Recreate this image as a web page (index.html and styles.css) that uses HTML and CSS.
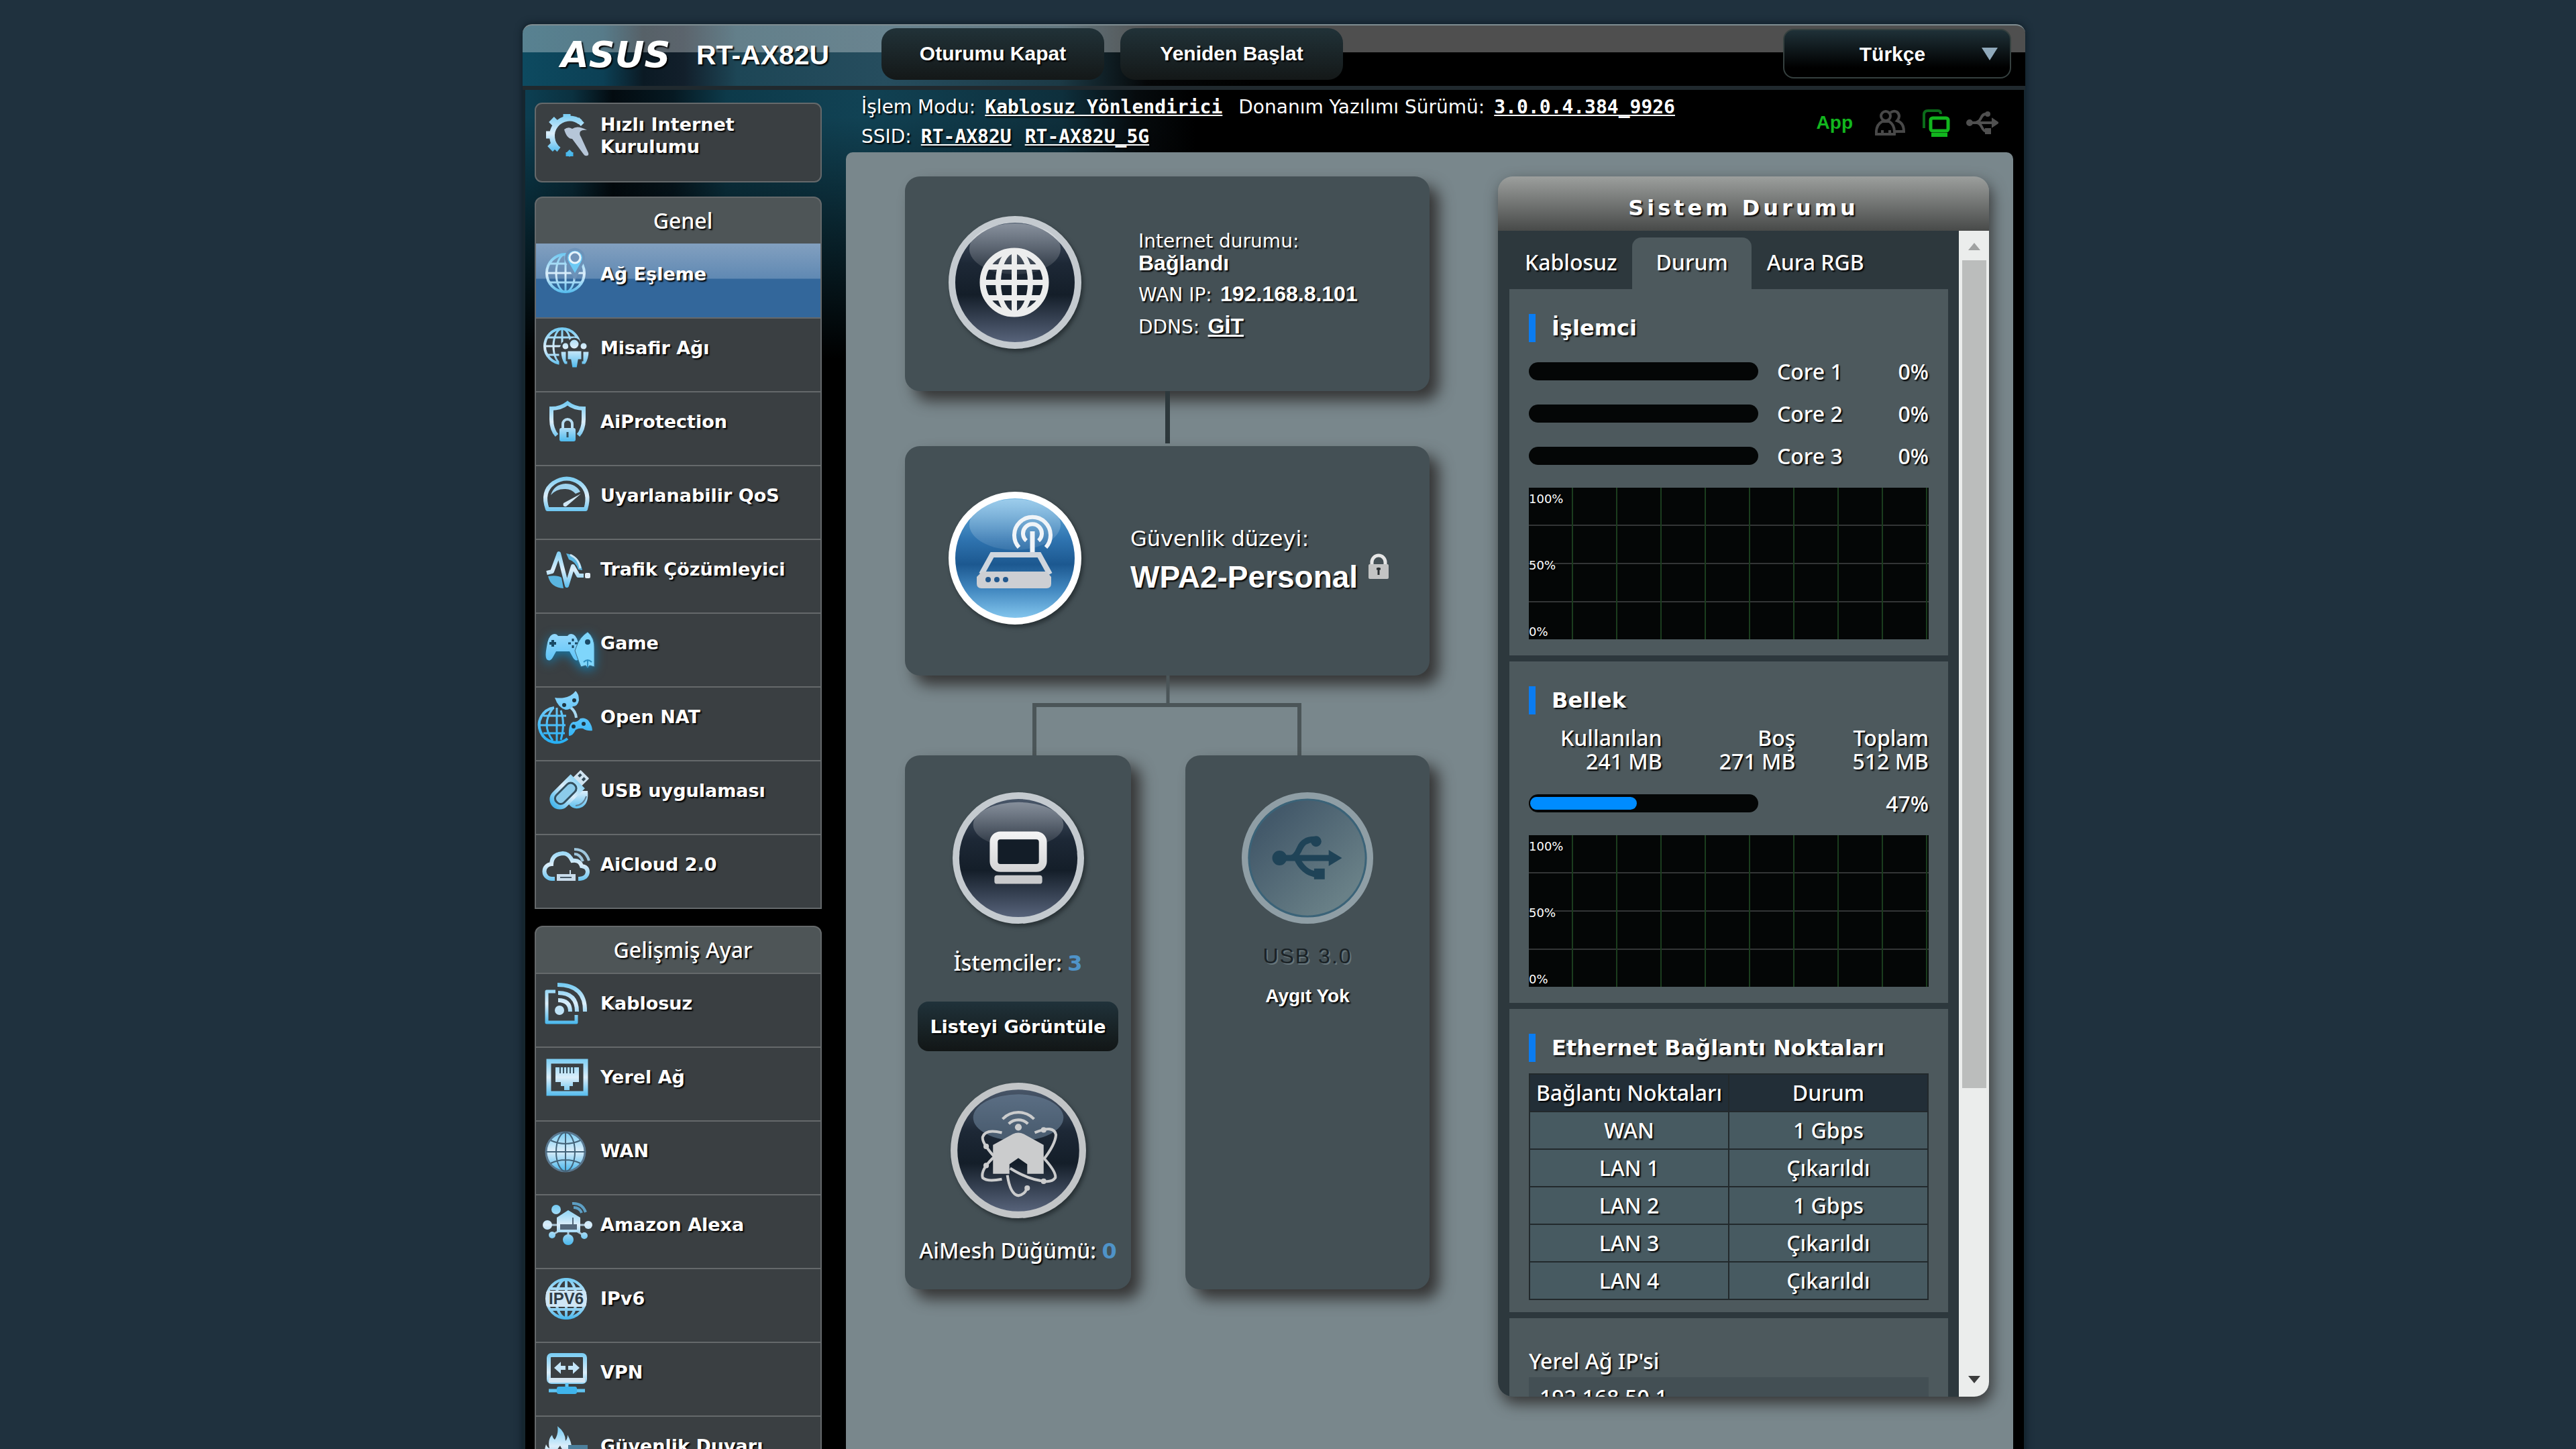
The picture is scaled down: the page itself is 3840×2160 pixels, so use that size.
FILE: index.html
```html
<!DOCTYPE html>
<html lang="tr">
<head>
    <meta charset="UTF-8">
    <meta name="viewport" content="width=device-width, initial-scale=1.0">
    <title>ASUS Wireless Router RT-AX82U - Ağ Eşleme</title>
    <link rel="stylesheet" href="styles.css">
</head>
<body>
    <!-- shared gradients and shapes -->
    <svg class="defs" width="0" height="0" aria-hidden="true">
        <defs>
            <linearGradient id="ice" gradientUnits="userSpaceOnUse" x1="0" y1="12" x2="0" y2="76">
                <stop offset="0" stop-color="#6cc8f2"/>
                <stop offset="0.5" stop-color="#dceefa"/>
                <stop offset="1" stop-color="#3fb4ec"/>
            </linearGradient>
            <linearGradient id="sky" gradientUnits="userSpaceOnUse" x1="0" y1="5" x2="0" y2="82">
                <stop offset="0" stop-color="#8fd6fb"/>
                <stop offset="1" stop-color="#27b0f5"/>
            </linearGradient>
            <linearGradient id="darkBall" x1="0" y1="0" x2="0" y2="1">
                <stop offset="0" stop-color="#4c5a6d"/>
                <stop offset="0.35" stop-color="#1d2836"/>
                <stop offset="0.6" stop-color="#141e29"/>
                <stop offset="1" stop-color="#5c6880"/>
            </linearGradient>
            <linearGradient id="blueBall" x1="0" y1="0" x2="0" y2="1">
                <stop offset="0" stop-color="#6db8e6"/>
                <stop offset="0.35" stop-color="#2f74b0"/>
                <stop offset="0.55" stop-color="#1c5890"/>
                <stop offset="0.75" stop-color="#4288c0"/>
                <stop offset="1" stop-color="#8accf2"/>
            </linearGradient>
            <linearGradient id="paleBall" x1="0" y1="0" x2="1" y2="1">
                <stop offset="0.2" stop-color="#43596a"/>
                <stop offset="0.8" stop-color="#698087"/>
            </linearGradient>
            <linearGradient id="gloss" x1="0" y1="0" x2="0" y2="1">
                <stop offset="0" stop-color="#fff" stop-opacity="0.35"/>
                <stop offset="1" stop-color="#fff" stop-opacity="0.08"/>
            </linearGradient>
            <linearGradient id="silver" gradientUnits="userSpaceOnUse" x1="0" y1="40" x2="0" y2="160">
                <stop offset="0" stop-color="#ffffff"/>
                <stop offset="1" stop-color="#bfc0c2"/>
            </linearGradient>
            <symbol id="pad" viewBox="0 0 52 42">
                <path d="M10 2q6-3 9 2h14q3-5 9-2 6 3 8 18 3 15 0 19-5 4-9-3l-5-9H16l-5 9q-4 7-9 3-3-4 0-19Q4 5 10 2z" fill="url(#sky)"/>
                <path d="M11 10v10M6 15h10" stroke="#1a4a66" stroke-width="4"/>
                <path d="M41 8v4M41 18v4M34 15h4M44 15h4" stroke="#1a4a66" stroke-width="3"/>
            </symbol>
        </defs>
    </svg>

    <div class="frame">
        <header class="top-banner">
            <span class="logo">ASUS</span>
            <h1 class="model">RT-AX82U</h1>
            <button type="button" class="title-btn">Oturumu Kapat</button>
            <button type="button" class="title-btn">Yeniden Başlat</button>
            <div class="lang">
                <select class="lang-select" aria-label="Dil">
                    <option>Türkçe</option>
                </select>
            </div>
        </header>

        <div class="page">
            <aside class="sidebar">
                <a href="#" class="quick">
                    <svg class="icon" viewBox="0 0 88 88">
                        <g fill="none" stroke="url(#ice)">
                            <path d="M66 27A24 24 0 1 0 34 68" stroke-width="8"/>
                            <path d="M46 23V15M29 29l-6-6M22 46h-7M27 61l-6 6M63 29l5-5M50 72v6" stroke-width="11"/>
                        </g>
                        <path d="M42 38q6-5 12-1 8-6 22 2-7-1-10 2-2 4 1 8l11 24q1 4-2 4-3 1-5-2L54 52q-8 0-12-14z" fill="#b6c6d8"/>
                        <path d="M50 68l5 5-5 6-5-6z" fill="#4fb9ea"/>
                    </svg>
                    <span>Hızlı Internet Kurulumu</span>
                </a>

                <nav class="menu">
                    <h2>Genel</h2>
                    <ul>
                        <li class="active"><a href="#">
                            <svg class="icon" viewBox="0 0 88 88">
                                <g fill="none" stroke="url(#ice)" stroke-width="3">
                                    <circle cx="44" cy="42" r="28" stroke-width="4"/>
                                    <ellipse cx="44" cy="42" rx="14" ry="28"/>
                                    <path d="M44 14v56M16 42h56M20 28h48M20 56h48"/>
                                </g>
                                <path d="M58 44l-9-18a11 11 0 1 1 18 0z" fill="#6d92b8" stroke="#6d92b8" stroke-width="8"/>
                                <path d="M58 42l-9-16a11 11 0 1 1 18 0z" fill="#6ccaf5"/>
                                <circle cx="58" cy="19" r="8" fill="#7194b9" stroke="#e5f3fb" stroke-width="3"/>
                            </svg>
                            <span>Ağ Eşleme</span>
                        </a></li>
                        <li><a href="#">
                            <svg class="icon" viewBox="0 0 88 88">
                                <g fill="none" stroke="url(#ice)" stroke-width="3">
                                    <circle cx="39" cy="41" r="26" stroke-width="4"/>
                                    <ellipse cx="39" cy="41" rx="13" ry="26"/>
                                    <path d="M39 15v52M13 41h52M17 28h44M17 54h44"/>
                                </g>
                                <g stroke="#3a3f42" stroke-width="3" fill="url(#ice)">
                                    <path d="M36 70V46q0-4 4-5h36q5 1 5 5v24H36z" fill="#3a3f42"/>
                                    <circle cx="44" cy="41" r="6"/><circle cx="71" cy="41" r="6"/>
                                    <path d="M36 48h12v21h-6q-6-8-6-21zM67 48h13q0 13-6 21h-7z"/>
                                    <circle cx="57" cy="38" r="8"/>
                                    <path d="M46 47h23v15h-5l-2 12h-9l-2-12h-5z"/>
                                </g>
                            </svg>
                            <span>Misafir Ağı</span>
                        </a></li>
                        <li><a href="#">
                            <svg class="icon" viewBox="0 0 88 88">
                                <path d="M31 64Q23 55 23 40V24q14 0 24-8 10 8 24 8v16q0 15-8 24" fill="none" stroke="url(#ice)" stroke-width="6"/>
                                <path d="M40 54V47a7 7 0 0 1 14 0v7" fill="none" stroke="#b6dcf1" stroke-width="4"/>
                                <rect x="35" y="53" width="24" height="20" rx="3" fill="url(#ice)"/>
                                <path d="M47 59v8" stroke="#33505f" stroke-width="3"/>
                            </svg>
                            <span>AiProtection</span>
                        </a></li>
                        <li><a href="#">
                            <svg class="icon" viewBox="0 0 88 88">
                                <path d="M17 64Q8 38 26 25q20-13 39 0 17 13 9 39z" fill="none" stroke="url(#ice)" stroke-width="6" stroke-linejoin="round"/>
                                <path d="M22 43q5-16 22-17 15 0 22 12l-7 3q-7-8-17-7-12 0-20 9z" fill="#9fd3ee"/>
                                <path d="M41 55l26-14-22 19q-6 1-4-5z" fill="#cfe6f4"/>
                            </svg>
                            <span>Uyarlanabilir QoS</span>
                        </a></li>
                        <li><a href="#">
                            <svg class="icon" viewBox="0 0 88 88">
                                <path d="M45 20q20 3 24 25l-6-1q-4-12-14-15zM18 54q14-2 20 2l3 16q-19-1-23-18z" fill="#5ab5e0"/>
                                <path d="M51 22q13 6 15 20" fill="none" stroke="#c9e4f3" stroke-width="3"/>
                                <path d="M16 49l8-2 10-27 12 48 9-29 8 14h8" fill="none" stroke="url(#ice)" stroke-width="6" stroke-linejoin="round"/>
                                <rect x="73" y="49" width="8" height="8" rx="2" fill="#e4eef6"/>
                            </svg>
                            <span>Trafik Çözümleyici</span>
                        </a></li>
                        <li><a href="#">
                            <svg class="icon glow" viewBox="0 0 88 88">
                                <use href="#pad" x="13" y="29" width="54" height="42"/>
                                <path d="M77 27q11 9 10 26v26l-7-2-3 4-3-4-7 2-4-10-5-14 3-8q4-12 16-20z" fill="#7fd6fb" stroke="#3a6b85" stroke-width="1"/>
                                <circle cx="77" cy="42" r="4" fill="#1a4a66"/>
                                <path d="M77 68v12M71 72q6-6 12 0" fill="none" stroke="#2f8fc0" stroke-width="2"/>
                            </svg>
                            <span>Game</span>
                        </a></li>
                        <li><a href="#">
                            <svg class="icon" viewBox="0 0 88 88">
                                <g fill="none" stroke="url(#sky)" stroke-width="3">
                                    <path d="M27 30A26 26 0 1 0 47 76" stroke-width="4"/>
                                    <path d="M31 30v50M6 56h38M11 42h34M11 68h32M25 31q-18 24 0 48M37 34q7 20 0 44"/>
                                    <path d="M52 30q7 5 8 15" stroke-width="4" stroke="#a8d8f0"/>
                                </g>
                                <path d="M28 15q8 1 14 0 11-2 17-10 5 4 5 14-2 9-9 9-4 5-11 5-11-3-16-18z" fill="url(#sky)"/>
                                <path d="M49 72q-1-19 7-21 6 1 10-5 7-2 12 3 6 8 6 15-8 1-14-3-6-1-11 2-4 9-10 9z" fill="url(#sky)"/>
                                <g fill="#1d3542"><circle cx="57" cy="19" r="3"/><circle cx="42" cy="26" r="3"/><circle cx="56" cy="58" r="3"/><circle cx="71" cy="54" r="3"/></g>
                            </svg>
                            <span>Open NAT</span>
                        </a></li>
                        <li><a href="#">
                            <svg class="icon" viewBox="0 0 88 88">
                                <path d="M60 44h17q2 18-8 24-12 6-20-4z" fill="url(#ice)"/>
                                <path d="M59 66q12-1 16-14" stroke="#5f7d92" stroke-width="2" fill="none"/>
                                <g transform="rotate(45 46 46)">
                                    <rect x="37" y="8" width="18" height="16" rx="1" fill="#cfe3f0"/>
                                    <path d="M42 12v5M50 12v5" stroke="#334a58" stroke-width="4"/>
                                    <path d="M31 23h30v38a15 15 0 0 1-30 0z" fill="url(#ice)"/>
                                    <rect x="38" y="30" width="16" height="37" rx="7" fill="#8ccbea" stroke="#35505f" stroke-width="3"/>
                                </g>
                            </svg>
                            <span>USB uygulaması</span>
                        </a></li>
                        <li><a href="#">
                            <svg class="icon" viewBox="0 0 88 88">
                                <path d="M28 65H24a11 11 0 0 1-1-22q1-15 17-16 9 0 14 11 11-2 14 8 9 1 9 9-1 9-12 10h-2" fill="none" stroke="url(#ice)" stroke-width="6"/>
                                <path d="M57 28q9 0 13 11M57 21q17 0 22 17" fill="none" stroke="#9fc6dc" stroke-width="4"/>
                                <path d="M32 59h26v8H32zM51 52v8" fill="#c9dceb" stroke="#c9dceb" stroke-width="2"/>
                                <path d="M36 63h17" stroke="#465866" stroke-width="2"/>
                            </svg>
                            <span>AiCloud 2.0</span>
                        </a></li>
                    </ul>
                </nav>

                <nav class="menu">
                    <h2>Gelişmiş Ayar</h2>
                    <ul>
                        <li><a href="#">
                            <svg class="icon" viewBox="0 0 88 88">
                                <path d="M29 26H16v46h44V61" fill="none" stroke="url(#ice)" stroke-width="5" stroke-linejoin="round"/>
                                <circle cx="35" cy="54" r="7" fill="#bfe2f5"/>
                                <path d="M33 39q18 0 18 17M33 28q28 0 28 28M32 16q42 0 41 40" fill="none" stroke="url(#ice)" stroke-width="6"/>
                            </svg>
                            <span>Kablosuz</span>
                        </a></li>
                        <li><a href="#">
                            <svg class="icon" viewBox="0 0 88 88">
                                <rect x="19" y="20" width="55" height="48" fill="none" stroke="url(#ice)" stroke-width="7"/>
                                <path d="M29 29h35v22h-9v6h-5v6H42v-6h-5v-6h-8z" fill="url(#ice)"/>
                                <path d="M36 29v9M41 29v9M46 29v9M51 29v9M56 29v9" stroke="#3a5260" stroke-width="2"/>
                            </svg>
                            <span>Yerel Ağ</span>
                        </a></li>
                        <li><a href="#">
                            <svg class="icon" viewBox="0 0 88 88">
                                <circle cx="44" cy="45" r="29" fill="url(#ice)" stroke="#5a7890" stroke-width="3"/>
                                <g fill="none" stroke="#44647a" stroke-width="2">
                                    <ellipse cx="44" cy="45" rx="14" ry="29"/>
                                    <path d="M44 16v58M15 45h58M22 28q22 10 44 0M22 62q22-10 44 0"/>
                                </g>
                            </svg>
                            <span>WAN</span>
                        </a></li>
                        <li><a href="#">
                            <svg class="icon" viewBox="0 0 88 88">
                                <path d="M17 44h61M24 59l10-6M72 60l-10-6M48 54v10" stroke="#a9c4d4" stroke-width="3"/>
                                <path d="M31 55V33l17-11 18 11v22z" fill="url(#ice)"/>
                                <path d="M37 44h23v6H37zM55 33v11" fill="#53677a" stroke="#53677a" stroke-width="2"/>
                                <g fill="url(#ice)">
                                    <circle cx="30" cy="21" r="7"/><circle cx="17" cy="44" r="7"/><circle cx="78" cy="44" r="6"/>
                                    <circle cx="24" cy="59" r="5"/><circle cx="72" cy="60" r="5"/><circle cx="48" cy="66" r="8"/>
                                </g>
                                <path d="M54 12q15-1 20 13M56 18q9 0 12 8" fill="none" stroke="#5d9fc4" stroke-width="4"/>
                            </svg>
                            <span>Amazon Alexa</span>
                        </a></li>
                        <li><a href="#">
                            <svg class="icon" viewBox="0 0 88 88">
                                <g fill="none" stroke="url(#ice)" stroke-width="4">
                                    <circle cx="45" cy="44" r="29"/>
                                    <ellipse cx="45" cy="44" rx="15" ry="29"/>
                                    <path d="M45 16v56M22 29h46M22 60h46"/>
                                </g>
                                <rect x="15" y="32" width="60" height="24" rx="4" fill="#cfe6f5"/>
                                <text x="45" y="52" class="ip-text">IPV6</text>
                            </svg>
                            <span>IPv6</span>
                        </a></li>
                        <li><a href="#">
                            <svg class="icon" viewBox="0 0 88 88">
                                <rect x="19" y="18" width="54" height="40" rx="4" fill="none" stroke="url(#ice)" stroke-width="6"/>
                                <path d="M19 52h54v7H19z" fill="#d5e6f2"/>
                                <path d="M27 37l10-9v6h7v6h-7v6zM65 37l-10-9v6h-7v6h7v6z" fill="#c3e5f8"/>
                                <path d="M46 60v6M19 71h54" stroke="#5fc3f0" stroke-width="5"/>
                                <rect x="31" y="65" width="30" height="11" rx="3" fill="#3fb4ec"/>
                            </svg>
                            <span>VPN</span>
                        </a></li>
                        <li><a href="#">
                            <svg class="icon" viewBox="0 0 88 88">
                                <path d="M32 14q12 9 12 22 3-3 3-9 7 12 6 22l-2 31H22Q8 62 15 41q2 5 5 6-3-13 4-20 1 5 4 7 6-9 4-20z" fill="url(#ice)"/>
                                <path d="M48 42h29v30H48z" fill="#4d7f9b"/>
                                <path d="M30 62q-2-10 6-19 3 7 8 10z" fill="#3a3f42"/>
                            </svg>
                            <span>Güvenlik Duvarı</span>
                        </a></li>
                    </ul>
                </nav>
            </aside>

            <main class="main">
                <div class="info-bar">
                    <div class="info-text">
                        <p>
                            <span>İşlem Modu:</span>
                            <a href="#">Kablosuz Yönlendirici</a>
                            <span class="second">Donanım Yazılımı Sürümü:</span>
                            <a href="#">3.0.0.4.384_9926</a>
                        </p>
                        <p>
                            <span>SSID:</span>
                            <a href="#">RT-AX82U</a>
                            <a href="#" class="ssid-5g">RT-AX82U_5G</a>
                        </p>
                    </div>
                    <div class="status-icons">
                        <a href="#" class="app">App</a>
                        <svg width="46" height="40" viewBox="0 0 46 40" fill="none" stroke="#484848" stroke-width="4">
                            <circle cx="16" cy="10" r="7"/>
                            <path d="M2 37q-1-14 9-19h10q9 5 8 19zM11 31v6M22 31v6"/>
                            <path d="M23 5q5-4 10-1 6 6 0 13 10 3 10 16h-13"/>
                        </svg>
                        <svg width="42" height="42" viewBox="0 0 42 42" fill="none">
                            <path d="M3 29V9q0-6 6-6h15q4 0 4 5" stroke="#0b6b1a" stroke-width="4"/>
                            <rect x="13" y="14" width="26" height="19" rx="3" stroke="#12b61e" stroke-width="5"/>
                            <path d="M14 39h24" stroke="#12b61e" stroke-width="6"/>
                        </svg>
                        <svg width="48" height="36" viewBox="0 0 48 36" fill="none" stroke="#505050" stroke-width="4">
                            <path d="M4 18h38M11 18q8 0 11-7t9-6M15 18q5 0 8 6 3 7 8 7"/>
                            <g fill="#505050"><circle cx="5" cy="18" r="3"/><circle cx="32" cy="5" r="2"/><path d="M40 14l6 4-6 4zM30 28h5v5h-5z"/></g>
                        </svg>
                    </div>
                </div>

                <div class="content">
                    <section class="network-map">
                        <div class="card internet">
                            <svg width="200" height="200" viewBox="0 0 200 200" class="ball">
                                <circle cx="100" cy="100" r="94" fill="url(#darkBall)" stroke="#c4cacf" stroke-width="10"/>
                                <ellipse cx="100" cy="50" rx="68" ry="38" fill="url(#gloss)"/>
                                <g fill="none" stroke="#eceded" stroke-width="8">
                                    <circle cx="99" cy="100" r="47" stroke-width="9"/>
                                    <ellipse cx="99" cy="100" rx="24" ry="47"/>
                                    <path d="M99 53v94M52 100h94M60 77h78M60 123h78"/>
                                </g>
                            </svg>
                            <div class="card-text">
                                <p class="label">Internet durumu:</p>
                                <p class="value">Bağlandı</p>
                                <p class="pair"><span class="label">WAN IP:</span> <span class="value">192.168.8.101</span></p>
                                <p class="pair tight"><span class="label">DDNS:</span> <a href="#" class="value">GİT</a></p>
                            </div>
                        </div>

                        <div class="line-single"></div>

                        <div class="card router">
                            <svg width="200" height="200" viewBox="0 0 200 200" class="ball">
                                <circle cx="100" cy="100" r="94" fill="url(#blueBall)" stroke="#fff" stroke-width="10"/>
                                <ellipse cx="100" cy="50" rx="68" ry="38" fill="url(#gloss)"/>
                                <g fill="none" stroke="#f0f4f8" stroke-width="6">
                                    <path d="M126 95V60" stroke-width="7"/>
                                    <path d="M106 84a27 27 0 1 1 40 0M117 74a14 14 0 1 1 18 0"/>
                                    <path d="M50 124l16-29h70l16 29" stroke="#cfd6de" stroke-width="8"/>
                                </g>
                                <path d="M51 120h96l7 8v10q0 7-7 7H50q-7 0-7-7v-10z" fill="#cdcfd3"/>
                                <g fill="#21588e"><circle cx="60" cy="132" r="4"/><circle cx="73" cy="132" r="4"/><circle cx="86" cy="132" r="4"/></g>
                            </svg>
                            <div class="card-text">
                                <p class="label">Güvenlik düzeyi:</p>
                                <p class="auth">WPA2-Personal
                                    <svg width="34" height="40" viewBox="0 0 34 40">
                                        <path d="M7 20V13a10 10 0 0 1 20 0v7" fill="none" stroke="#e6e6e6" stroke-width="5"/>
                                        <rect x="2" y="16" width="30" height="22" rx="2" fill="#c3c4c4"/>
                                        <path d="M17 21v11M14 23h6" stroke="#2b3033" stroke-width="3"/>
                                    </svg>
                                </p>
                            </div>
                        </div>

                        <svg class="line-fork" viewBox="0 0 782 119" fill="none" stroke="#4b5558">
                            <path d="M392 0v44" stroke-width="5"/>
                            <path d="M193 119V44h395v75" stroke-width="6"/>
                        </svg>

                        <div class="card-row">
                            <div class="card clients">
                                <svg width="198" height="198" viewBox="0 0 200 200" class="ball">
                                    <circle cx="100" cy="100" r="94" fill="url(#darkBall)" stroke="#c4cacf" stroke-width="10"/>
                                    <ellipse cx="100" cy="50" rx="68" ry="34" fill="url(#gloss)"/>
                                    <rect x="63" y="66" width="74" height="49" rx="10" fill="#131d28" stroke="url(#silver)" stroke-width="12"/>
                                    <rect x="64" y="126" width="72" height="13" rx="4" fill="#c9cacc"/>
                                </svg>
                                <p class="count clients-count">İstemciler: <b>3</b></p>
                                <button type="button" class="list-btn">Listeyi Görüntüle</button>
                                <svg width="204" height="204" viewBox="0 0 200 200" class="ball">
                                    <circle cx="100" cy="100" r="94" fill="url(#darkBall)" stroke="#c2c5c7" stroke-width="10"/>
                                    <ellipse cx="100" cy="52" rx="66" ry="34" fill="#6b8299" opacity="0.6"/>
                                    <path d="M92 76q8-4 16 0l29 16v42h-24v-14l-13-9-13 9v14H63V92z" fill="#cbcccd"/>
                                    <g fill="none" stroke="#cbcccd" stroke-width="4">
                                        <path d="M77 54a32 32 0 0 1 46 0M86 61a20 20 0 0 1 28 0"/>
                                        <path d="M76 74q-24-6-28 6-2 8 16 28M124 74q28-12 31 3-1 14-18 36M66 108q-22 20-18 32 6 6 28 2M138 112q18 20 16 28-6 8-22 4-20-3-44-18M84 136q4 28 16 30 10-2 12-10"/>
                                    </g>
                                    <g fill="#cbcccd"><circle cx="100" cy="66" r="5"/><circle cx="53" cy="94" r="4"/><circle cx="53" cy="122" r="4"/><circle cx="137" cy="70" r="4"/><circle cx="137" cy="145" r="4"/><circle cx="113" cy="155" r="4"/></g>
                                </svg>
                                <p class="count">AiMesh Düğümü: <b>0</b></p>
                            </div>
                            <div class="card usb">
                                <svg width="198" height="198" viewBox="0 0 200 200" class="usb-ball">
                                    <circle cx="100" cy="100" r="94" fill="url(#paleBall)" stroke="#8f9ea5" stroke-width="10"/>
                                    <circle cx="100" cy="100" r="88" fill="none" stroke="#3b6378" stroke-width="3"/>
                                    <g fill="none" stroke="#1f4357" stroke-width="9">
                                        <path d="M56 100h80M74 100q8 0 14-14t22-14M84 100q4 10 12 17t20 8"/>
                                    </g>
                                    <g fill="#1f4357"><circle cx="58" cy="100" r="11"/><circle cx="113" cy="75" r="8"/><path d="M132 88l20 12-20 12zM110 116h16v16h-16z"/></g>
                                </svg>
                                <p class="usb-name">USB 3.0</p>
                                <p class="usb-state">Aygıt Yok</p>
                            </div>
                        </div>
                    </section>

                    <section class="status">
                        <h2 class="status-title">Sistem Durumu</h2>
                        <div class="status-body">
                            <div class="status-scroll">
                                <div class="tabs" role="tablist">
                                    <button type="button" role="tab" class="tab">Kablosuz</button>
                                    <button type="button" role="tab" class="tab tab-active" aria-selected="true">Durum</button>
                                    <button type="button" role="tab" class="tab">Aura RGB</button>
                                </div>

                                <div class="box">
                                    <h3>İşlemci</h3>
                                    <div class="usage"><span class="bar"></span><span>Core 1</span><span class="percent">0%</span></div>
                                    <div class="usage"><span class="bar"></span><span>Core 2</span><span class="percent">0%</span></div>
                                    <div class="usage"><span class="bar"></span><span>Core 3</span><span class="percent">0%</span></div>
                                    <div class="graph"><span>100%</span><span>50%</span><span>0%</span></div>
                                </div>

                                <div class="box">
                                    <h3>Bellek</h3>
                                    <div class="memory">
                                        <p>Kullanılan<br>241 MB</p>
                                        <p>Boş<br>271 MB</p>
                                        <p>Toplam<br>512 MB</p>
                                    </div>
                                    <div class="usage"><span class="bar"><span class="fill" style="width: 47%"></span></span><span class="percent">47%</span></div>
                                    <div class="graph"><span>100%</span><span>50%</span><span>0%</span></div>
                                </div>

                                <div class="box box-ports">
                                    <h3>Ethernet Bağlantı Noktaları</h3>
                                    <table class="ports">
                                        <thead>
                                            <tr><th>Bağlantı Noktaları</th><th>Durum</th></tr>
                                        </thead>
                                        <tbody>
                                            <tr><td>WAN</td><td>1 Gbps</td></tr>
                                            <tr><td>LAN 1</td><td>Çıkarıldı</td></tr>
                                            <tr><td>LAN 2</td><td>1 Gbps</td></tr>
                                            <tr><td>LAN 3</td><td>Çıkarıldı</td></tr>
                                            <tr><td>LAN 4</td><td>Çıkarıldı</td></tr>
                                        </tbody>
                                    </table>
                                </div>

                                <div class="box lan-ip">
                                    <p>Yerel Ağ IP'si</p>
                                    <div class="ip-value">192.168.50.1</div>
                                </div>
                            </div>
                            <div class="scrollbar">
                                <span class="arrow-up"></span>
                                <span class="thumb"></span>
                                <span class="arrow-down"></span>
                            </div>
                        </div>
                    </section>
                </div>
            </main>
        </div>
    </div>
</body>
</html>
```
FILE: styles.css
```css
* {
    box-sizing: border-box;
}

body {
    margin: 0;
    padding: 36px 42px 0 0;
    height: 100vh;
    overflow: hidden;
    background-color: #1f313e;
    color: #fff;
    font-family: "Noto Sans", Tahoma, sans-serif;
    font-size: 32px;
    font-weight: 500;
    text-shadow: 2px 2px 2px #000;
}

p, h1, h2, h3, ul {
    margin: 0;
    padding: 0;
}

a {
    color: inherit;
}

button, select {
    font: inherit;
    color: inherit;
    text-shadow: inherit;
    border: none;
    cursor: pointer;
}

svg {
    display: block;
    flex-shrink: 0;
}

.defs {
    position: absolute;
}

.frame {
    max-width: 2240px;
    margin: 0 auto;
    border-radius: 14px 14px 0 0;
    background-color: #000;
    box-shadow: 0 0 12px #0c1a24;
}

/* top banner */
.top-banner {
    display: flex;
    align-items: center;
    height: 98px;
    padding: 0 21px 6px 57px;
    border-top: 2px solid #7f8d92;
    border-bottom: 6px solid #20292e;
    border-radius: 14px 14px 0 0;
    background:
        linear-gradient(rgba(255, 255, 255, 0.31) 40px, transparent 40px),
        linear-gradient(90deg, #0d4a60 0, #0c4055 120px, #0b1a24 180px, #121f2b 240px, #1d4656 320px, #264d5e 540px, #1c3a46 800px, #050708 930px, #000 1100px);
}

.logo,
.model {
    padding-top: 4px;
    line-height: 50px;
}

.logo {
    width: 202px;
    font-family: "DejaVu Sans", Verdana, sans-serif;
    font-size: 54px;
    font-style: italic;
    font-weight: bold;
}

.model {
    width: 276px;
    font-family: "Liberation Sans", Arial, sans-serif;
    font-size: 41px;
}

.title-btn,
.lang-select {
    height: 77px;
    border-radius: 22px;
    background: linear-gradient(#213238, #141818);
    font-family: "Liberation Sans", Arial, sans-serif;
    font-size: 30px;
    font-weight: bold;
}

.title-btn {
    width: 332px;
    margin-right: 24px;
}

.lang {
    position: relative;
    width: 340px;
    margin-left: auto;
}

.lang-select {
    width: 100%;
    height: 74px;
    padding: 0 14px 0 0;
    border: 2px solid #35403f;
    border-radius: 16px;
    background: linear-gradient(#1f3138, #000 80%);
    appearance: none;
    text-align-last: center;
}

.lang::after {
    content: "";
    position: absolute;
    top: 28px;
    right: 20px;
    border: 12px solid transparent;
    border-top: 19px solid #90a9bb;
    border-bottom: 0;
    pointer-events: none;
}

.page {
    display: flex;
    gap: 36px;
    padding: 0 16px 0 14px;
    border: solid #16262f;
    border-width: 0 2px 0 4px;
    background:
        linear-gradient(transparent 40px, #000 400px),
        linear-gradient(90deg, #0c3f52 0, #0b3140 70px, #030b10 130px, #061922 220px, #0d3a4a 300px, #114254 500px, #0e2f3c 800px, #060b0e 910px, #000 1000px);
}

/* left menu */
.sidebar {
    flex: 0 0 428px;
    padding-top: 19px;
    font-family: "DejaVu Sans", Verdana, sans-serif;
    font-size: 27px;
    font-weight: bold;
}

.quick {
    display: flex;
    height: 119px;
    margin-bottom: 21px;
    border: 2px solid #65696b;
    border-radius: 11px;
    background-color: #3a3f42;
    line-height: 33px;
    text-decoration: none;
}

.quick span {
    padding: 14px 60px 0 8px;
}

.icon {
    width: 88px;
    height: 88px;
}

.glow {
    filter: drop-shadow(0 4px 8px #1779a8);
}

.ip-text {
    font-family: "Liberation Sans", Arial, sans-serif;
    font-size: 24px;
    font-weight: bold;
    fill: #2f3d47;
    text-anchor: middle;
    text-shadow: none;
}

.menu {
    margin-bottom: 25px;
    border: 2px solid #65696b;
    border-radius: 12px 12px 0 0;
    background-color: #4e5557;
}

.menu h2 {
    font-family: "Noto Sans", Tahoma, sans-serif;
    font-size: 32px;
    font-weight: 500;
    line-height: 68px;
    padding-left: 14px;
    text-align: center;
}

.menu ul {
    list-style: none;
}

.menu li {
    height: 110px;
    border-top: 2px solid #65696b;
    background-color: #3a3f42;
}

.menu li.active {
    border-top-color: #819fbf;
    background: linear-gradient(#819fbf, #6089b3 50px, #33679b 51px);
}

.menu a {
    display: flex;
    height: 100%;
    text-decoration: none;
}

.menu span {
    padding: 27px 0 0 8px;
    line-height: 34px;
}

/* operation mode, firmware and status icons */
.main {
    flex: 1;
    min-width: 0;
}

.info-bar {
    display: flex;
    justify-content: space-between;
    height: 93px;
    padding: 4px 22px 0 23px;
    font-family: "DejaVu Sans", Verdana, sans-serif;
    font-size: 28px;
}

.info-text p {
    display: flex;
    gap: 14px;
    line-height: 44px;
}

.info-text a {
    font-family: "DejaVu Sans Mono", "Lucida Console", monospace;
    font-weight: bold;
}

.info-text .second {
    margin-left: 10px;
}

.info-text .ssid-5g {
    margin-left: 6px;
}

.status-icons {
    display: flex;
    align-items: center;
    gap: 24px;
}

.app {
    margin-right: 9px;
    color: #12b61e;
    font-family: "Liberation Sans", Arial, sans-serif;
    font-size: 28px;
    font-weight: bold;
    text-decoration: none;
}

.content {
    display: grid;
    grid-template-columns: 782px 1fr;
    gap: 102px;
    min-height: 2000px;
    padding: 36px 36px 36px 88px;
    border-radius: 10px 10px 0 0;
    background-color: #79878c;
}

/* network map */
.card {
    border-radius: 22px;
    background-color: #445055;
    box-shadow: 14px 14px 22px #353535;
}

.ball {
    filter: drop-shadow(3px 4px 3px #273034);
}

.internet,
.router {
    display: flex;
    padding-left: 64px;
}

.internet {
    height: 320px;
    padding-top: 58px;
    gap: 84px;
}

.router {
    height: 342px;
    padding-top: 67px;
    gap: 72px;
}

.label {
    font-family: "DejaVu Sans", Verdana, sans-serif;
    font-size: 28px;
    line-height: 32px;
}

.value {
    font-family: "Liberation Sans", Arial, sans-serif;
    font-size: 32px;
    font-weight: bold;
    line-height: 32px;
}

.internet .card-text {
    padding-top: 23px;
}

.internet .pair {
    margin-top: 5px;
    line-height: 48px;
}

.internet .pair .value {
    margin-left: 4px;
}

.internet .tight {
    margin-top: 0;
}

.router .card-text {
    padding-top: 49px;
}

.router .label {
    font-size: 32px;
    line-height: 44px;
}

.auth {
    display: flex;
    gap: 14px;
    font-family: "Liberation Sans", Arial, sans-serif;
    font-size: 46px;
    font-weight: bold;
    line-height: 70px;
}

.line-single {
    width: 7px;
    height: 78px;
    margin: 0 auto 4px;
    background-color: #2d383c;
}

.line-fork {
    width: 100%;
    height: 119px;
}

.card-row {
    display: grid;
    grid-template-columns: 337px 364px;
    justify-content: space-between;
}

.clients,
.usb {
    display: flex;
    flex-direction: column;
    align-items: center;
    height: 796px;
    padding-top: 54px;
}

.count {
    margin-top: 25px;
    line-height: 44px;
}

.clients-count {
    margin: 35px 0;
}

.count b {
    color: #4f93c8;
    font-family: "DejaVu Sans", Verdana, sans-serif;
    text-shadow: none;
}

.list-btn {
    width: 299px;
    height: 74px;
    margin-bottom: 46px;
    padding: 0;
    border-radius: 16px;
    background: linear-gradient(#20323a, #121616);
    font-family: "DejaVu Sans", Verdana, sans-serif;
    font-size: 27px;
    font-weight: bold;
}

.usb-name {
    margin: 29px 0 22px;
    color: #1a2226;
    font-family: "Liberation Sans", Arial, sans-serif;
    letter-spacing: 2px;
    line-height: 36px;
    text-shadow: 2px 2px 0 #66757b;
}

.usb-state {
    font-family: "Liberation Sans", Arial, sans-serif;
    font-size: 28px;
    font-weight: bold;
    line-height: 40px;
}

/* system status */
.status {
    align-self: start;
    overflow: hidden;
    border-radius: 22px;
    box-shadow: 4px 10px 22px #353535;
}

.status-title {
    padding-top: 14px;
    background: linear-gradient(#9c9f9d, #484a49);
    font-family: "DejaVu Sans", Verdana, sans-serif;
    font-size: 32px;
    letter-spacing: 5px;
    line-height: 67px;
    text-align: center;
}

.status-body {
    display: flex;
    height: 1738px;
    background-color: #2d383d;
}

.status-scroll {
    flex: 1;
    padding: 10px 16px 0 17px;
    overflow: hidden;
}

.tabs {
    display: flex;
}

.tab {
    height: 77px;
    padding: 0 23px 4px;
    background: none;
}

.tab-active {
    padding: 0 35px 4px;
    border-radius: 14px 14px 0 0;
    background-color: #4d595d;
}

.box {
    margin-bottom: 9px;
    padding: 37px 29px 24px;
    background-color: #4d595d;
}

.box h3 {
    padding-left: 24px;
    border-left: 10px solid #0a7cf2;
    font-family: "DejaVu Sans", Verdana, sans-serif;
    font-size: 32px;
    line-height: 42px;
    margin-bottom: 12px;
}

.usage {
    display: flex;
    align-items: center;
    gap: 28px;
    height: 63px;
}

.bar {
    width: 342px;
    height: 27px;
    padding: 4px 2px;
    border-radius: 14px;
    background-color: #040606;
}

.fill {
    display: block;
    height: 19px;
    border-radius: 10px;
    background-color: #008cff;
}

.percent {
    margin-left: auto;
}

.graph {
    display: flex;
    flex-direction: column;
    justify-content: space-between;
    height: 226px;
    margin-top: 16px;
    padding-top: 6px;
    background:
        linear-gradient(90deg, transparent 64px, #1b3d1e 64px) 0 0 / 66px 100%,
        linear-gradient(transparent 55px, #333536 55px) 0 0 / 100% 57px,
        #040606;
    font-family: "DejaVu Sans", Verdana, sans-serif;
    font-size: 18px;
    line-height: 22px;
}

.memory {
    display: grid;
    grid-template-columns: repeat(3, 1fr);
    margin: 17px 0 14px;
    line-height: 35px;
    text-align: right;
}

.box-ports {
    padding-bottom: 18px;
}

.ports {
    width: 100%;
    margin-top: 17px;
    border-collapse: collapse;
    table-layout: fixed;
    text-align: center;
}

.ports th,
.ports td {
    height: 56px;
    padding: 0;
    border: 2px solid #22292c;
    line-height: 44px;
}

.ports th {
    background-color: #222e37;
    font-weight: 500;
}

.ports td {
    background-color: #475a61;
}

.lan-ip {
    padding-top: 42px;
    line-height: 44px;
}

.ip-value {
    margin-top: 2px;
    padding: 8px 16px;
    background-color: #434f54;
}

.scrollbar {
    display: flex;
    flex-direction: column;
    align-items: center;
    width: 45px;
    padding: 18px 0 20px;
    background-color: #ebedec;
}

.arrow-up,
.arrow-down {
    border: 9px solid transparent;
}

.arrow-up {
    border-top: 0;
    border-bottom: 11px solid #a0a2a1;
}

.arrow-down {
    margin-top: auto;
    border-bottom: 0;
    border-top: 11px solid #3c3d3d;
}

.thumb {
    width: 36px;
    height: 1234px;
    margin-top: 15px;
    background-color: #bbbdbc;
}
```
